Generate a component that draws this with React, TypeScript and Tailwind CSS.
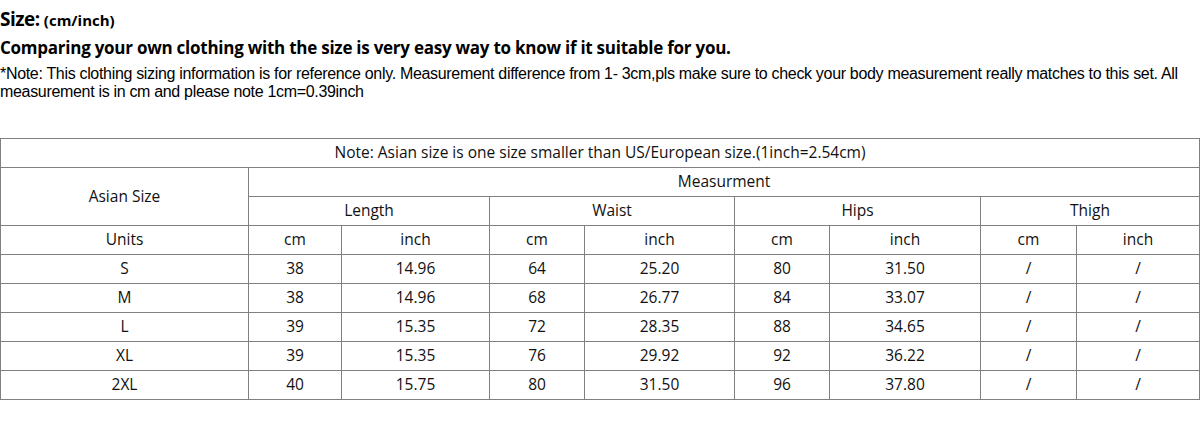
import React from "react";

const ROWS = [
  ["S", "38", "14.96", "64", "25.20", "80", "31.50", "/", "/"],
  ["M", "38", "14.96", "68", "26.77", "84", "33.07", "/", "/"],
  ["L", "39", "15.35", "72", "28.35", "88", "34.65", "/", "/"],
  ["XL", "39", "15.35", "76", "29.92", "92", "36.22", "/", "/"],
  ["2XL", "40", "15.75", "80", "31.50", "96", "37.80", "/", "/"],
];

const WIDTHS = [248, 93, 148, 95, 150, 95, 151, 96, 123];

const cell = "border border-[#808080] text-center p-0 h-[29px] align-middle";

export default function App() {
  return (
    <div className="w-[1201px] h-[421px] bg-white text-black">
      <div className="pt-[9px] font-['Open_Sans','Noto_Sans',sans-serif] font-bold leading-[20px]">
        <span className="text-[19px] tracking-[-0.5px]">Size:</span>{" "}
        <span className="text-[15px]">(cm/inch)</span>
      </div>
      <div className="mt-[8px] font-['Open_Sans','Noto_Sans',sans-serif] font-bold text-[17px] leading-[20px] tracking-[-0.25px]">
        Comparing your own clothing with the size is very easy way to know if it suitable for you.
      </div>
      <div className="mt-[7px] font-['Liberation_Sans',Arial,sans-serif] text-[16px] leading-[18px] tracking-[-0.32px]">
        *Note: This clothing sizing information is for reference only. Measurement difference from 1- 3cm,pls make sure to check your body measurement really matches to this set. All measurement is in cm and please note 1cm=0.39inch
      </div>
      <table className="mt-[37px] w-[1200px] table-fixed border-collapse border border-[#222] font-['Open_Sans','Noto_Sans',sans-serif] text-[15.5px] text-[#111]">
        <colgroup>
          {WIDTHS.map((w, i) => (
            <col key={i} style={{ width: w }} />
          ))}
        </colgroup>
        <tbody>
          <tr>
            <td colSpan={9} className={cell}>
              Note: Asian size is one size smaller than US/European size.(1inch=2.54cm)
            </td>
          </tr>
          <tr>
            <td rowSpan={2} className={cell}>
              Asian Size
            </td>
            <td colSpan={8} className={cell}>
              Measurment
            </td>
          </tr>
          <tr>
            <td colSpan={2} className={cell}>Length</td>
            <td colSpan={2} className={cell}>Waist</td>
            <td colSpan={2} className={cell}>Hips</td>
            <td colSpan={2} className={cell}>Thigh</td>
          </tr>
          <tr>
            <td className={cell}>Units</td>
            <td className={cell}>cm</td>
            <td className={cell}>inch</td>
            <td className={cell}>cm</td>
            <td className={cell}>inch</td>
            <td className={cell}>cm</td>
            <td className={cell}>inch</td>
            <td className={cell}>cm</td>
            <td className={cell}>inch</td>
          </tr>
          {ROWS.map((r) => (
            <tr key={r[0]}>
              {r.map((v, i) => (
                <td key={i} className={cell}>
                  {v}
                </td>
              ))}
            </tr>
          ))}
        </tbody>
      </table>
    </div>
  );
}
